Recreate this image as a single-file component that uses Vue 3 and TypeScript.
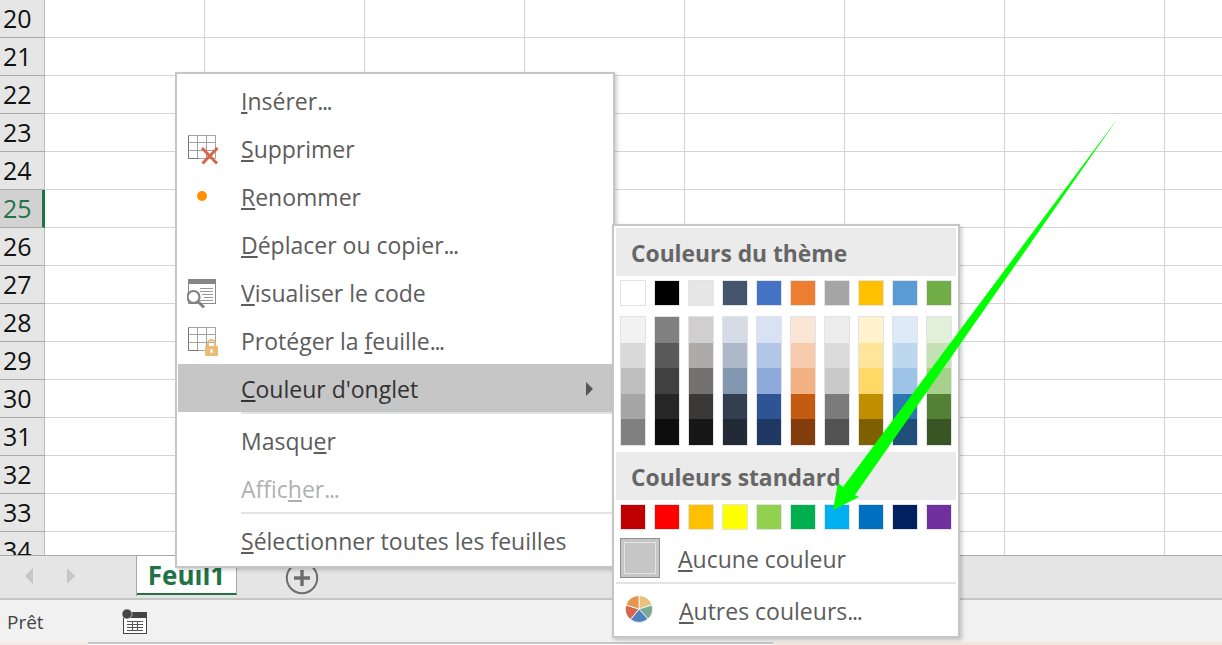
<script setup lang="ts">
interface MenuItem {
  pre: string
  key: string
  post: string
  icon?: string
  dots?: boolean
  disabled?: boolean
  active?: boolean
  sepAfter?: boolean
}

const rows = Array.from({ length: 15 }, (_, i) => 20 + i)

const menuItems: MenuItem[] = [
  { pre: '', key: 'I', post: 'nsérer', dots: true },
  { pre: '', key: 'S', post: 'upprimer', icon: 'delete' },
  { pre: '', key: 'R', post: 'enommer', icon: 'dot' },
  { pre: '', key: 'D', post: 'éplacer ou copier', dots: true },
  { pre: '', key: 'V', post: 'isualiser le code', icon: 'code' },
  { pre: 'Protéger la ', key: 'f', post: 'euille', icon: 'lock', dots: true },
  { pre: '', key: 'C', post: "ouleur d'onglet", active: true, sepAfter: true },
  { pre: 'Masqu', key: 'e', post: 'r' },
  { pre: 'Affic', key: 'h', post: 'er', dots: true, disabled: true, sepAfter: true },
  { pre: '', key: 'S', post: 'électionner toutes les feuilles' },
]

const themeTop = ['#ffffff', '#000000', '#e7e6e6', '#44546a', '#4472c4', '#ed7d31', '#a5a5a5', '#ffc000', '#5b9bd5', '#70ad47']

const themeColumns = [
  ['#f2f2f2', '#d9d9d9', '#bfbfbf', '#a6a6a6', '#808080'],
  ['#808080', '#595959', '#404040', '#262626', '#0d0d0d'],
  ['#d0cece', '#aeaaaa', '#767171', '#3b3838', '#171717'],
  ['#d6dce5', '#adb9ca', '#8497b0', '#333f50', '#222a35'],
  ['#d9e2f3', '#b4c6e7', '#8eaadb', '#2f5496', '#1f3864'],
  ['#fbe5d5', '#f7cbac', '#f4b183', '#c55a11', '#833c0b'],
  ['#ededed', '#dbdbdb', '#c9c9c9', '#7b7b7b', '#525252'],
  ['#fff2cc', '#fee599', '#ffd966', '#bf8f00', '#7f6000'],
  ['#deeaf6', '#bdd7ee', '#9dc3e6', '#2e75b5', '#1f4e79'],
  ['#e2efd9', '#c5e0b3', '#a8d08d', '#538135', '#375623'],
]

const standard = ['#c00000', '#ff0000', '#ffc000', '#ffff00', '#92d050', '#00b050', '#00b0f0', '#0070c0', '#002060', '#7030a0']
</script>

<template>
  <div class="window">
    <div class="sheet">
      <div class="row-heads">
        <div v-for="r in rows" :key="r" class="row-head" :class="{ current: r === 25 }">{{ r }}</div>
      </div>
      <div class="cells"></div>
    </div>

    <div class="tab-bar">
      <div class="tab-nav">
        <span class="nav-left"></span>
        <span class="nav-right"></span>
      </div>
      <div class="tab">Feuil1</div>
      <div class="add-sheet">
        <svg width="34" height="34" viewBox="0 0 34 34">
          <circle cx="17" cy="17" r="15.2" fill="none" stroke="#6d6d6d" stroke-width="2" />
          <path d="M17 9v16M9 17h16" stroke="#6d6d6d" stroke-width="3.4" />
        </svg>
      </div>
    </div>

    <div class="status-bar">
      <span class="ready">Prêt</span>
      <svg class="macro" width="28" height="26" viewBox="0 0 28 26">
        <rect x="2.5" y="5.5" width="23" height="19" fill="#fff" stroke="#444" />
        <rect x="2" y="3" width="24" height="6" fill="#444" />
        <circle cx="6" cy="5" r="5" fill="#444" stroke="#f1f1f1" stroke-width="0.6" />
        <path d="M6 12.5h16M6 15.5h16M6 18.5h16M6 21.5h16M11.500 12v10M16.500 12v10" stroke="#555" fill="none" />
      </svg>
    </div>
    <div class="bottom-strip">
      <span class="strip-a"></span>
      <span class="strip-b"></span>
      <span class="strip-c"></span>
    </div>

    <div class="menu">
      <template v-for="(item, i) in menuItems" :key="i">
        <div class="menu-item" :class="{ active: item.active, disabled: item.disabled }">
          <span class="menu-icon">
            <svg v-if="item.icon === 'delete'" width="32" height="32" viewBox="0 0 32 32">
              <path d="M1.500 3.500h27v23h-27zM1.500 10.500h27M1.500 18.500h27M10.500 3.500v23M19.500 3.500v23" fill="#fff" stroke="#a3a3a3" />
              <path d="M1.500 26.500h10M1.500 3.500v23" fill="none" stroke="#777" />
              <path d="M15 16l15 15.500M30.500 16L15.500 31.500" stroke="#d8664a" stroke-width="3" fill="none" />
            </svg>
            <span v-else-if="item.icon === 'dot'" class="dot"></span>
            <svg v-else-if="item.icon === 'code'" width="32" height="32" viewBox="0 0 32 32">
              <rect x="1.500" y="3.500" width="27" height="24" fill="#fff" stroke="#8a8a8a" />
              <rect x="1" y="3" width="28" height="5" fill="#858585" />
              <path d="M13 12.500h13M13 15.500h13M15 18.500h11M17 21.500h9M13 24.500h13" stroke="#999" />
              <circle cx="6.500" cy="21" r="6" fill="#fff" stroke="#808080" stroke-width="2.200" />
              <path d="M11 25.500L17 31.500" stroke="#808080" stroke-width="3" />
            </svg>
            <svg v-else-if="item.icon === 'lock'" width="32" height="32" viewBox="0 0 32 32">
              <path d="M1.500 3.500h27v23h-27zM1.500 10.500h27M1.500 18.500h27M10.500 3.500v23M19.500 3.500v23" fill="#fff" stroke="#a3a3a3" />
              <path d="M1.500 26.500h10M1.500 3.500v23" fill="none" stroke="#777" />
              <path d="M21 22v-2.500a3.500 3.500 0 0 1 7 0V22" fill="none" stroke="#e8bd77" stroke-width="2" />
              <rect x="18" y="22" width="13" height="10" rx="1" fill="#e8bd77" />
              <rect x="23.500" y="25" width="2" height="4" fill="#fff" />
            </svg>
          </span>
          <span class="menu-label">{{ item.pre }}<u>{{ item.key }}</u>{{ item.post }}<span v-if="item.dots" class="dots">...</span></span>
          <span v-if="item.active" class="submenu-caret"></span>
        </div>
        <div v-if="item.sepAfter" class="menu-sep"></div>
      </template>
    </div>

    <div class="palette">
      <div class="pal-head">Couleurs du thème</div>
      <div class="swatch-row top-row">
        <span v-for="c in themeTop" :key="c" class="swatch" :style="{ background: c }"></span>
      </div>
      <div class="swatch-row shades">
        <div v-for="(col, i) in themeColumns" :key="i" class="shade-col">
          <span v-for="c in col" :key="c" :style="{ background: c }"></span>
        </div>
      </div>
      <div class="pal-head">Couleurs standard</div>
      <div class="swatch-row std-row">
        <span v-for="c in standard" :key="c" class="swatch" :style="{ background: c }"></span>
      </div>
      <div class="pal-item no-color">
        <span class="no-color-box"><i></i></span>
        <span class="pal-label"><u>A</u>ucune couleur</span>
      </div>
      <div class="pal-sep"></div>
      <div class="pal-item more">
        <svg class="pie" width="30" height="30" viewBox="0 0 30 30">
          <g stroke="#fff" stroke-width="0.8">
            <path d="M15 15V1.500A13.500 13.500 0 0 1 28 11z" fill="#e9c27d" />
            <path d="M15 15L28 11A13.500 13.500 0 0 1 24 25z" fill="#7aa998" />
            <path d="M15 15L24 25A13.500 13.500 0 0 1 6.500 25.500z" fill="#4f81bd" />
            <path d="M15 15L6.500 25.500A13.500 13.500 0 0 1 2 11z" fill="#d8664a" />
            <path d="M15 15L2 11A13.500 13.500 0 0 1 15 1.500z" fill="#e5964f" />
          </g>
        </svg>
        <span class="pal-label"><u>A</u>utres couleurs<span class="dots">...</span></span>
      </div>
    </div>

    <svg class="arrow" width="1222" height="645" viewBox="0 0 1222 645">
      <path d="M1118 118L855 495L859 497L833 510L838 483L843 487Z" fill="#00ff00" />
    </svg>
  </div>
</template>

<style scoped>
.window {
  position: relative;
  width: 1222px;
  height: 645px;
  overflow: hidden;
  background: #fff;
  font-family: "Open Sans", "Noto Sans", sans-serif;
  display: flex;
  flex-direction: column;
}

.sheet {
  display: flex;
  height: 555px;
  overflow: hidden;
}

.row-heads {
  width: 45px;
  flex: none;
}

.row-head {
  height: 38px;
  box-sizing: border-box;
  background: #e6e6e6;
  border-right: 1px solid #bcbcbc;
  border-bottom: 1px solid #a9a9a9;
  font-size: 25px;
  line-height: 37px;
  padding-left: 3px;
  color: #111;
}

.row-head.current {
  background: #d2d2d2;
  color: #217346;
  border-right: 3px solid #217346;
}

.cells {
  flex: 1;
  background-color: #fff;
  background-image:
    linear-gradient(to right, transparent 159px, #d4d4d4 159px, #d4d4d4 160px),
    linear-gradient(to bottom, transparent 37px, #d4d4d4 37px, #d4d4d4 38px);
  background-size: 160px 100%, 100% 38px;
  background-position: 0 0, 0 0;
}

.tab-bar {
  height: 43px;
  flex: none;
  box-sizing: border-box;
  background: #e5e5e5;
  display: flex;
  position: relative;
  border-top: 1px solid #a9a9a9;
}

.tab-nav {
  width: 137px;
  box-sizing: border-box;
  padding-left: 25px;
  display: flex;
  align-items: center;
  gap: 34px;
  height: 40px;
  border-right: 1px solid #a9a9a9;
}

.nav-left,
.nav-right {
  width: 0;
  height: 0;
  border-top: 8px solid transparent;
  border-bottom: 8px solid transparent;
}

.nav-left {
  border-right: 8px solid #c6c6c6;
}

.nav-right {
  border-left: 8px solid #c6c6c6;
}

.tab {
  width: 100px;
  height: 39px;
  box-sizing: border-box;
  background: #fff;
  border-right: 1px solid #a9a9a9;
  border-bottom: 2px solid #217346;
  color: #217346;
  font-weight: 700;
  font-size: 26px;
  line-height: 38px;
  text-align: center;
}

.add-sheet {
  margin-left: 48px;
  margin-top: 5px;
  height: 34px;
}

.status-bar {
  height: 44px;
  flex: none;
  box-sizing: border-box;
  background: #f1f1f1;
  border-top: 2px solid #c6c6c6;
  display: flex;
  align-items: center;
  font-size: 19px;
  color: #444;
  padding: 2px 0 0 7px;
}

.macro {
  margin-left: 77px;
}

.bottom-strip {
  flex: 1;
  display: flex;
}

.strip-a {
  width: 88px;
  background: #f4ebe6;
}

.strip-b {
  width: 685px;
  box-sizing: border-box;
  border-top: 2px solid #c6c6c6;
  background: #fff;
}

.strip-c {
  flex: 1;
  background: #f4e6dc;
}

/* context menu, floats over the sheet */
.menu {
  position: absolute;
  left: 175px;
  top: 72px;
  width: 440px;
  box-sizing: border-box;
  background: #fff;
  border: 2px solid #c6c6c6;
  padding: 2px 1px 2px 1px;
  box-shadow: 2px 2px 4px rgba(0, 0, 0, 0.2);
  font-size: 23px;
  color: #5c5c5c;
}

.menu-item {
  height: 48px;
  display: flex;
  align-items: center;
  position: relative;
}

.menu-item.active {
  background: #c6c6c6;
  color: #333;
}

.menu-item.disabled {
  color: #b1b1b1;
}

.menu-icon {
  width: 63px;
  height: 32px;
  flex: none;
  display: flex;
  align-items: center;
  padding-left: 9px;
  box-sizing: border-box;
}

.dot {
  width: 10px;
  height: 10px;
  margin-left: 10px;
  border-radius: 50%;
  background: #ff9000;
}

.menu-label {
  white-space: nowrap;
  position: relative;
  top: 1px;
}

.dots {
  letter-spacing: -1.3px;
}

.submenu-caret {
  position: absolute;
  right: 19px;
  top: 18px;
  border-left: 7px solid #555;
  border-top: 7px solid transparent;
  border-bottom: 7px solid transparent;
}

.menu-sep {
  height: 2px;
  margin: 0 0 2px 63px;
  background: #e1e3e6;
}

/* colour picker submenu */
.palette {
  position: absolute;
  left: 612px;
  top: 224px;
  width: 348px;
  height: 414px;
  box-sizing: border-box;
  background: #fff;
  border: 2px solid #c6c6c6;
  padding: 2px;
  box-shadow: 2px 2px 4px rgba(0, 0, 0, 0.2);
  font-size: 23px;
  color: #5c5c5c;
}

.pal-head {
  height: 48px;
  background: #ebebeb;
  box-sizing: border-box;
  padding-left: 15px;
  font-weight: 700;
  font-size: 22.8px;
  line-height: 52px;
  color: #666;
}

.swatch-row {
  display: flex;
  gap: 8px;
  padding-left: 4px;
}

.top-row {
  margin-top: 4px;
}

.std-row {
  margin-top: 4px;
}

.swatch {
  width: 26px;
  height: 26px;
  box-sizing: border-box;
  border: 1px solid #e1e3e6;
}

.shades {
  margin-top: 10px;
  margin-bottom: 6px;
}

.shade-col {
  width: 26px;
  height: 130px;
  box-sizing: border-box;
  border: 1px solid #e1e3e6;
  display: flex;
  flex-direction: column;
}

.shade-col span {
  flex: 1;
}

.pal-item {
  display: flex;
  align-items: center;
}

.no-color {
  height: 48px;
  padding-left: 4px;
  margin-top: 4px;
}

.no-color-box {
  width: 40px;
  height: 40px;
  box-sizing: border-box;
  background: #c6c6c6;
  border: 1px solid #8f8f8f;
  padding: 3px;
  display: block;
}

.no-color-box i {
  display: block;
  height: 100%;
  box-sizing: border-box;
  border: 1px solid #e4e4e4;
}

.no-color .pal-label {
  margin-left: 18px;
  position: relative;
  top: 1px;
}

.pal-sep {
  height: 2px;
  background: #e1e3e6;
}

.more {
  height: 50px;
  padding-left: 8px;
}

.pal-label {
  white-space: nowrap;
}

.more .pal-label {
  margin-left: 25px;
  position: relative;
  top: 2px;
}

.arrow {
  position: absolute;
  left: 0;
  top: 0;
  pointer-events: none;
}
</style>
